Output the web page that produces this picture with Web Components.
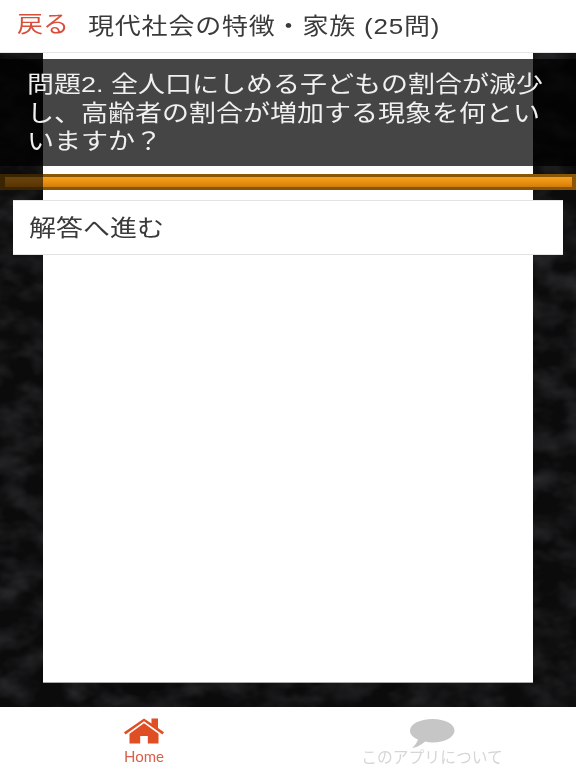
<!DOCTYPE html>
<html lang="ja"><head><meta charset="utf-8"><title>現代社会の特徴・家族</title>
<style>
html,body{margin:0;padding:0;background:#fff}
body{width:576px;height:768px;overflow:hidden;font-family:"Liberation Sans","Noto Sans CJK JP",sans-serif}
</style></head><body>
<quiz-app>
  <quiz-header slot="header" back="戻る">現代社会の特徴・家族 (25問)</quiz-header>
  <quiz-stage slot="stage">
    <quiz-question>問題2. 全人口にしめる子どもの割合が減少<br>し、高齢者の割合が増加する現象を何とい<br>いますか？</quiz-question>
    <quiz-progress></quiz-progress>
    <quiz-answer>解答へ進む</quiz-answer>
  </quiz-stage>
  <quiz-tabs slot="tabs"></quiz-tabs>
</quiz-app>
<script>
function def(name, css, html){
  customElements.define(name, class extends HTMLElement{
    constructor(){super();const s=this.attachShadow({mode:'open'});
      s.innerHTML='<style>'+css+'</style>'+(typeof html==='function'?html(this):html);}
  });
}
const CJK='"Liberation Sans","Noto Sans CJK JP",sans-serif';
def('quiz-app',`:host{display:flex;flex-direction:column;width:576px;height:768px;background:#fff}`,
 '<slot name="header"></slot><slot name="stage"></slot><slot name="tabs"></slot>');
def('quiz-header',`:host{display:flex;box-sizing:border-box;height:53px;margin-bottom:-1px;position:relative;z-index:1;align-items:flex-start;background:#fff;border-bottom:1px solid #e6e6e6;font-family:${CJK};overflow:hidden}
 .back{color:#d8503c;font-size:26px;line-height:32px;padding:12px 0 0 17px;width:71px;flex:none;transform:scaleY(.86);transform-origin:0 0;white-space:nowrap;filter:blur(.3px)}
 .title{color:#3a3a3a;font-size:26px;letter-spacing:.8px;line-height:32px;padding-top:15px;white-space:nowrap;transform:scaleY(.86);transform-origin:0 0;flex:none;filter:blur(.3px)}`,
 h=>`<span class="back">${h.getAttribute('back')}</span><span class="title"><slot></slot></span>`);
def('quiz-stage',`:host{display:flex;flex-direction:column;position:relative;background:#0b0b0c;overflow:hidden;height:655px;flex:none}
 svg.tex{position:absolute;inset:0;width:100%;height:100%}
 .col{position:absolute;left:43px;top:0;width:490px;height:631px;background:#fff;border-bottom:1px solid #aaa;box-sizing:border-box}
 .flow{position:relative;display:flex;flex-direction:column}`,
 `<svg class="tex" viewBox="0 0 576 655" preserveAspectRatio="none" aria-hidden="true"><filter id="n" x="0" y="0" width="100%" height="100%"><feTurbulence type="fractalNoise" baseFrequency=".03 .045" numOctaves="3" seed="7"/><feColorMatrix values="0 0 0 0 .12 0 0 0 0 .12 0 0 0 0 .13 .45 .45 0 0 -.37"/></filter><rect width="576" height="655" fill="#0b0b0c"/><rect width="576" height="655" filter="url(#n)"/></svg>
 <div class="col"></div><div class="flow"><slot></slot></div>`);
def('quiz-question',`:host{display:block;box-sizing:border-box;margin-top:7px;height:107px;background:rgba(0,0,0,.73);overflow:hidden;font-family:${CJK}}
 .t{display:block;color:#f0f0f0;font-size:27px;line-height:33.500px;padding:14px 0 0 27px;white-space:nowrap;transform:scaleY(.85);transform-origin:0 0;filter:blur(.3px)}`,
 '<span class="t"><slot></slot></span>');
def('quiz-progress',`:host{display:block;box-sizing:border-box;margin-top:8px;height:16px;padding:3px 4px 3px 5px;background:#8a5606;position:relative}
 .b{display:block;height:100%;background:linear-gradient(#f3a21f,#e98e10 55%,#cf7d0c)}
 .d{position:absolute;left:0;top:0;width:43px;height:100%;background:rgba(0,0,0,.58)}`,
 '<span class="b"></span><span class="d"></span>');
def('quiz-answer',`:host{display:block;box-sizing:border-box;margin:10px 13px 0;height:55px;background:#fff;border:solid #e2e2e2;border-width:1px 0;overflow:hidden;font-family:${CJK}}
 .t{display:block;color:#3a3a3a;font-size:27px;line-height:33px;padding:16px 0 0 16px;white-space:nowrap;transform:scaleY(.86);transform-origin:0 0;filter:blur(.3px)}`,
 '<span class="t"><slot></slot></span>');
def('quiz-tabs',`:host{display:grid;grid-template-columns:288px 288px;height:61px;flex:none;background:#fff;font-family:${CJK}}
 .tab{display:flex;flex-direction:column;align-items:center;padding-top:11px;box-sizing:border-box}
 svg{display:block;flex:none}
 .l{line-height:16px;white-space:nowrap;filter:blur(.25px)}
 .home .l{color:#d8604c;font-family:Lato,"Liberation Sans",sans-serif;font-size:15px;margin-top:4px}
 .about .l{color:#d6d6d6;font-size:15.8px;margin-top:0}`,
 `<div class="tab home"><svg width="42" height="26" viewBox="0 0 42 26" aria-hidden="true"><path fill="#e04e24" d="M1 14.200 21 .5l7.500 5V.5h6.500v9.500l6 4.200-1.500 2.300L21 3.300 2.500 16.500z"/><path fill="#e04e24" d="M6.500 15.800 21 5.200 35.500 15.800V25.500H24.800v-7.500h-7.600v7.500H6.500z"/></svg><span class="l">Home</span></div>
 <div class="tab about"><svg width="46" height="31" viewBox="0 0 46 31" aria-hidden="true" style="margin-top:1px"><path fill="#c6c6c6" d="M23.500 0C36 0 45.500 5 45.500 11.500S36 23.500 23.500 23.500c-2.500 0-5-.3-7.300-.9C12.500 26 8 28.500 3 29c2.500-2 5-5 6-8.400C4 18.500 1 15.300 1 11.500 1 5 11 0 23.500 0z"/></svg><span class="l">このアプリについて</span></div>`);
</script>
</body></html>
